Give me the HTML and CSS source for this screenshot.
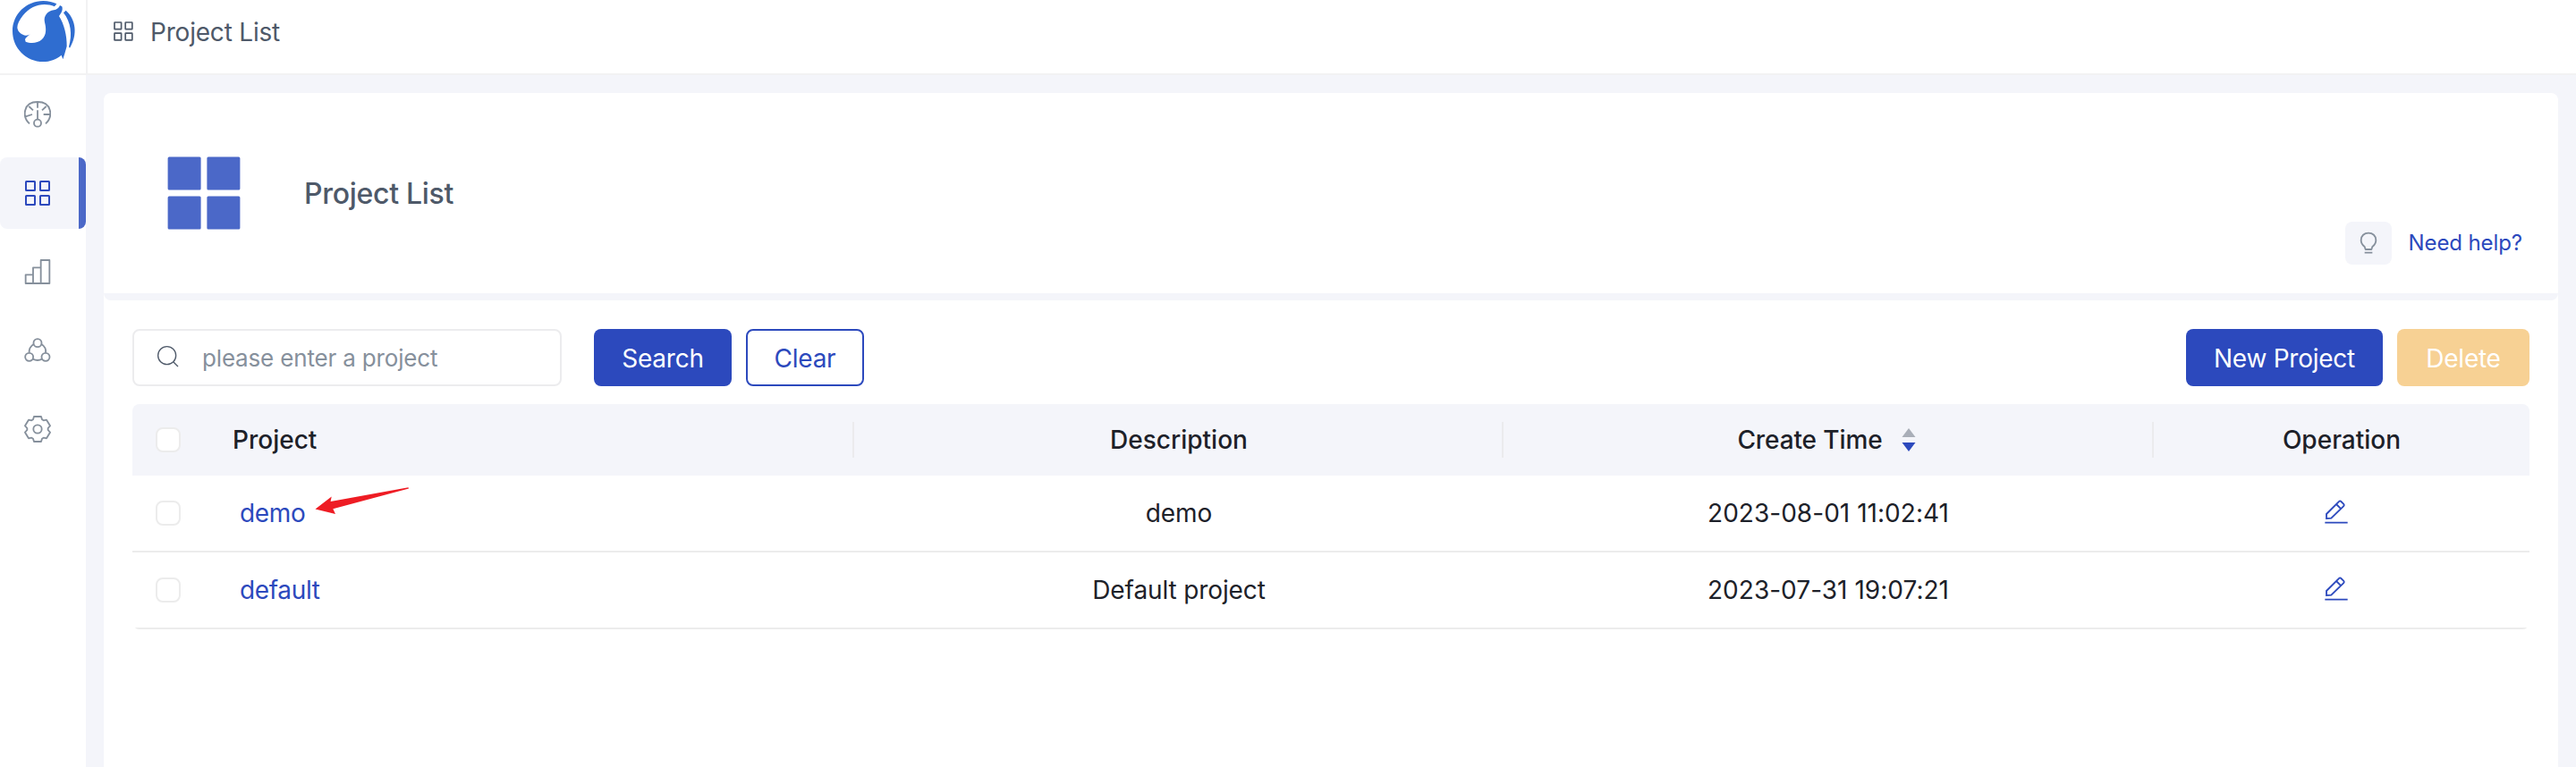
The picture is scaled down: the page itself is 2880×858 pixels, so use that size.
FILE: index.html
```html
<!DOCTYPE html>
<html lang="en">
<head>
<meta charset="utf-8">
<title>Project List</title>
<link rel="stylesheet" href="styles.css">
</head>
<body>
<div class="app">
  <aside class="sidebar">
    <div class="logo">
      <svg viewBox="0 0 288 246" width="96" height="82" fill="#2f6dd0">
        <path d="M42 104C42 48 88 3 145 3C162 3 178 7 190 13L183 22C150 7 105 15 77 52C65 67 58 81 58 93C60 108 73 118 87 119C93 119 98 117 102 114C95 121 86 125 84 132L86 140C100 146 125 147 140 133C157 117 155 95 150 75C145 53 160 37 180 34C190 32 198 27 201 18L208 22C212 35 205 45 198 54C215 80 225 120 224 155L217 180L211 199L206 185C188 200 167 207 145 207C87 207 42 161 42 104Z"/>
        <path d="M213 43L221 35C255 65 261 116 234 161L231 157C243 115 238 75 213 43Z"/>
      </svg>
    </div>
    <nav class="menu">
      <a class="menu-item">
        <svg viewBox="81 339 90 90" width="30" height="30" class="stroke">
          <path d="M99 415C73 391 78 342 126 342C174 342 179 391 153 415M126 344V362M97 357L111 370M155 357L141 370M86 391L108 384M168 384H146M126 370V400"/>
          <circle cx="126" cy="413" r="12"/>
        </svg>
      </a>
      <a class="menu-item active">
        <svg viewBox="0 0 30 30" width="30" height="30" class="stroke-2">
          <rect x="2" y="2" width="10" height="10" rx=".5"/><rect x="18" y="2" width="10" height="10" rx=".5"/>
          <rect x="2" y="18" width="10" height="10" rx=".5"/><rect x="18" y="18" width="10" height="10" rx=".5"/>
        </svg>
      </a>
      <a class="menu-item">
        <svg viewBox="81 87 90 90" width="30" height="30" class="stroke">
          <path d="M86 142H111V171H86ZM111 118H137V171H111ZM137 93H166V171H137Z"/>
        </svg>
      </a>
      <a class="menu-item">
        <svg viewBox="81 351 90 90" width="30" height="30" class="stroke">
          <circle cx="126" cy="371" r="13.5"/><circle cx="98" cy="418" r="13.5"/><circle cx="153" cy="418" r="13.5"/>
          <path d="M113 375C102 382 97 392 98 404M139 375C150 382 155 392 153 404M110 425C120 430 132 430 141 425"/>
        </svg>
      </a>
      <a class="menu-item">
        <svg viewBox="-45 -45 90 90" width="30" height="30" class="stroke">
          <path d="M-12 -42H12L15 -32L20 -29L30 -31L42 -11L35 -3V3L42 11L30 31L20 29L15 32L12 42H-12L-15 32L-20 29L-30 31L-42 11L-35 3V-3L-42 -11L-30 -31L-20 -29L-15 -32Z"/>
          <circle r="14"/>
        </svg>
      </a>
    </nav>
  </aside>
  <div class="main">
    <header class="topbar">
      <svg viewBox="0 0 22 22" width="22" height="22" fill="none" stroke="#4e5969" stroke-width="1.7">
        <rect x="1" y="1" width="7.6" height="7.6" rx=".4"/><rect x="13.2" y="1" width="7.6" height="7.6" rx=".4"/>
        <rect x="1" y="13.2" width="7.6" height="7.6" rx=".4"/><rect x="13.2" y="13.2" width="7.6" height="7.6" rx=".4"/>
      </svg>
      <span class="crumb">Project List</span>
    </header>
    <main class="content">
      <section class="banner">
        <svg class="banner-icon" viewBox="0 0 82 82" width="82" height="82" fill="#4b68c8">
          <rect x=".6" y=".6" width="37" height="37" rx="1.5"/><rect x="44.4" y=".6" width="37" height="37" rx="1.5"/>
          <rect x=".6" y="44.4" width="37" height="37" rx="1.5"/><rect x="44.4" y="44.4" width="37" height="37" rx="1.5"/>
        </svg>
        <h1 class="banner-title">Project List</h1>
        <div class="help">
          <span class="help-icon">
            <svg viewBox="714 87 60 78" width="20" height="26" class="stroke">
              <path d="M734 147L731 138C725 133 719 126 719 116C719 101 730 92 744 92C758 92 769 101 769 116C769 126 763 133 757 138L754 147ZM731 158H757"/>
            </svg>
          </span>
          <a class="help-link">Need help?</a>
        </div>
      </section>
      <div class="gap-strip"></div>
      <section class="panel">
        <div class="toolbar">
          <div class="search-box">
            <svg viewBox="528 384 72 72" width="24" height="24" fill="none" stroke="#4e5969" stroke-width="4">
              <circle cx="560" cy="416" r="30"/><path d="M582 438L597 453"/>
            </svg>
            <span class="placeholder">please enter a project</span>
          </div>
          <button class="btn btn-search">Search</button>
          <button class="btn btn-clear">Clear</button>
          <button class="btn btn-new">New Project</button>
          <button class="btn btn-delete">Delete</button>
        </div>
        <div class="table">
          <div class="row head">
            <div class="cell check"><span class="checkbox"></span></div>
            <div class="cell name">Project</div>
            <div class="cell">Description</div>
            <div class="cell time">Create Time
              <svg viewBox="0 0 16 26" width="16" height="26"><path fill="#a9aeb8" d="M8 0L15.5 10H.5Z"/><path fill="#2c49bd" d="M8 26L15.5 16H.5Z"/></svg>
            </div>
            <div class="cell">Operation</div>
          </div>
          <div class="row">
            <div class="cell check"><span class="checkbox"></span></div>
            <div class="cell name"><a class="link">demo</a>
              <svg class="pointer" viewBox="352 545 106 31" width="106" height="31" fill="#ee1c24"><path d="M352.5 569.5L370.7 555.5L369.6 561L456.5 545.2L457 546.4L372.3 569.3L375 575Z"/></svg>
            </div>
            <div class="cell desc">demo</div>
            <div class="cell date">2023-08-01 11:02:41</div>
            <div class="cell edit">
              <svg viewBox="597 55 78 81" width="26" height="27" class="pencil"><path d="M603 118V103L644 62Q648 57 652 61L660 69Q664 73 660 77L619 117ZM636 70L650 84M598 132H674"/></svg>
            </div>
          </div>
          <div class="row">
            <div class="cell check"><span class="checkbox"></span></div>
            <div class="cell name"><a class="link">default</a></div>
            <div class="cell desc">Default project</div>
            <div class="cell date">2023-07-31 19:07:21</div>
            <div class="cell edit">
              <svg viewBox="597 55 78 81" width="26" height="27" class="pencil"><path d="M603 118V103L644 62Q648 57 652 61L660 69Q664 73 660 77L619 117ZM636 70L650 84M598 132H674"/></svg>
            </div>
          </div>
        </div>
      </section>
    </main>
  </div>
</div>
</body>
</html>
```
FILE: styles.css
```css
* { box-sizing: border-box; }
body { margin: 0; font-family: Inter, "Liberation Sans", sans-serif; font-size: 28px; line-height: 40px; color: #1d2129; background: #f4f5fa; }
svg { display: block; flex: none; }
.stroke { fill: none; stroke: currentColor; stroke-width: 5.5; stroke-linejoin: round; }
.stroke-2 { fill: none; stroke: currentColor; stroke-width: 2; }
.app { display: flex; height: 858px; overflow: hidden; }

.sidebar { width: 96px; background: #fff; flex: none; }
.logo { height: 84px; border-bottom: 2px solid #f2f2f3; }
.menu { display: flex; flex-direction: column; gap: 8px; padding-top: 4px; }
.menu-item { height: 80px; padding-left: 27px; display: flex; align-items: center; color: #86909c; border-radius: 8px; }
.menu-item.active { color: #2c49bd; background: linear-gradient(to right, #f4f5fa 88px, #4b68c8 88px); }

.main { flex: 1; min-width: 0; display: flex; flex-direction: column; }
.topbar { height: 84px; flex: none; background: #fff; border-bottom: 2px solid #f2f2f3; border-left: 2px solid #f2f2f3; padding: 0 0 12px 29px; display: flex; align-items: center; gap: 19px; color: #4e5969; }
.crumb { white-space: nowrap; letter-spacing: -.2px; padding-top: 2px; }
.content { flex: 1; padding: 20px 20px 0; display: flex; flex-direction: column; }
.banner { height: 224px; flex: none; background: #fff; border-radius: 8px 8px 0 0; display: flex; align-items: center; padding: 0 40px 0 71px; }
.banner-title { margin: 0 auto 0 71px; padding-top: 2px; font-size: 32px; font-weight: 500; letter-spacing: -.3px; color: #4e5969; }
.help { align-self: flex-end; margin-bottom: 32px; display: flex; align-items: center; gap: 19px; }
.help-icon { width: 52px; height: 48px; border-radius: 8px; background: #f4f5fa; color: #86909c; display: flex; align-items: center; justify-content: center; }
.help-link { font-size: 24px; letter-spacing: -.1px; color: #2c49bd; }
.gap-strip { height: 8px; flex: none; background: #fff; }
.gap-strip::before { content: ""; display: block; height: 8px; background: #f4f5fa; border-radius: 0 0 8px 8px; }
.panel { flex: 1; background: #fff; padding: 32px 32px 0; }

.toolbar { display: flex; height: 64px; margin-bottom: 20px; }
.search-box { width: 480px; border: 2px solid #ececee; border-radius: 8px; display: flex; align-items: center; padding-left: 26px; gap: 26px; margin-right: 36px; }
.placeholder { font-size: 26px; color: #86909c; white-space: nowrap; letter-spacing: -.17px; padding-top: 2px; }
.search-box svg { margin-bottom: 2px; }
.btn { font: inherit; letter-spacing: -.25px; border: 0; border-radius: 8px; padding: 1px 0 0; color: #fff; background: #2c49bd; white-space: nowrap; }
.btn-search { width: 154px; margin-right: 16px; }
.btn-clear { width: 132px; background: #fff; color: #2c49bd; border: 2px solid #2c49bd; }
.btn-new { width: 220px; margin-left: auto; margin-right: 16px; }
.btn-delete { width: 148px; background: #f7d194; }

.table { border-radius: 8px; overflow: hidden; }
.row { display: grid; grid-template-columns: 80px 727px 726px 727px 420px; height: 86px; border-bottom: 2px solid #ececec; }
.row.head { height: 80px; border-bottom: 0; background: #f4f5fa; font-weight: 500; }
.cell { display: flex; align-items: center; justify-content: center; white-space: nowrap; }
.cell.check { justify-content: flex-start; padding-left: 26px; }
.checkbox { width: 28px; height: 28px; border: 2px solid #ececec; border-radius: 8px; background: #fff; }
.cell.name { justify-content: flex-start; padding-left: 40px; }
.head .cell.name { padding-left: 32px; }
.head .name, .head .name + .cell, .head .time { background: linear-gradient(#ebebed, #ebebed) right center / 2px 40px no-repeat; }
.head .time { gap: 21px; padding-right: 5px; letter-spacing: -.1px; }
.link { color: #2c49bd; letter-spacing: -.35px; }
.desc { letter-spacing: -.12px; }
.date { padding-right: 1px; letter-spacing: .03px; }
.pointer { align-self: flex-start; margin: 13px 0 0 11px; }
.edit { padding: 0 12px 4px 0; }
.pencil { fill: none; stroke: #2c49bd; stroke-width: 5.5; }
```
